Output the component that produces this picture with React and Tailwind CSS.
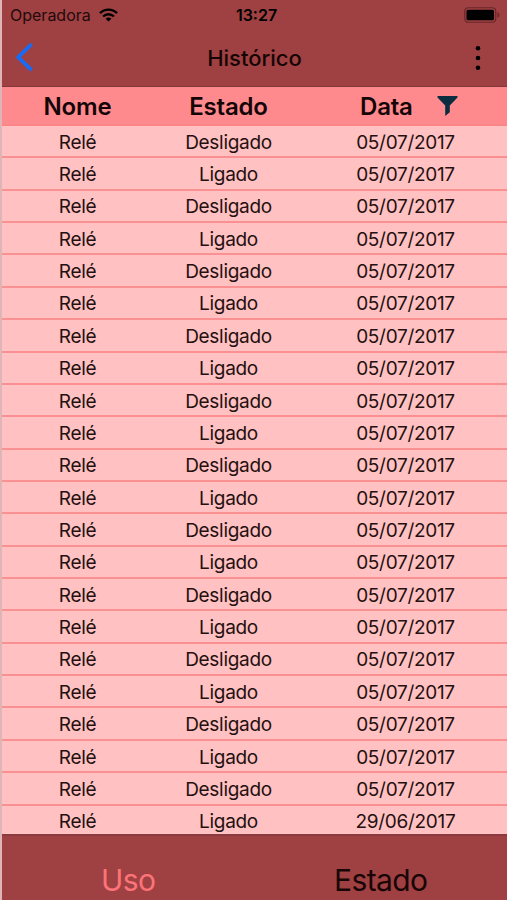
import React from 'react';

const rows = Array.from({ length: 22 }, (_, i) => ({
  id: i,
  nome: 'Relé',
  estado: i % 2 === 0 ? 'Desligado' : 'Ligado',
  data: i === 21 ? '29/06/2017' : '05/07/2017',
}));

const StatusBar = () => (
  <div className="grid grid-cols-[1fr_auto_1fr] items-center h-[30px] pl-2 pr-[7px] text-black">
    <div className="flex items-center gap-[8px]">
      <span className="text-[16px] leading-5 text-[#230a0b]">Operadora</span>
      <svg className="w-[19px] h-[14px]" viewBox="0 0 19 14" fill="none" stroke="currentColor" strokeWidth="2.4">
        <path d="M1 5.2C5.8 0.4 13.2 0.4 18 5.2" />
        <path d="M4.1 8.5C7.2 5.5 11.8 5.5 14.9 8.5" />
        <path d="M9.5 13.6 6.6 10.7C8.3 9.2 10.7 9.2 12.4 10.7Z" fill="currentColor" stroke="none" />
      </svg>
    </div>
    <span className="pl-[3px] text-[16px] leading-5 font-semibold">13:27</span>
    <svg className="w-9 h-4 justify-self-end" viewBox="0 0 36 16">
      <rect x="0.75" y="0.75" width="31" height="14.5" rx="3.5" fill="none" stroke="#6b2729" strokeWidth="1.2" />
      <rect x="2.5" y="2.7" width="27.5" height="10.6" rx="1.5" fill="#000" />
      <path d="M33.5 5.2c2.6 0.8 2.6 4.8 0 5.6Z" fill="#6b2729" />
    </svg>
  </div>
);

const NavBar = () => (
  <div className="grid grid-cols-[1fr_auto_1fr] items-center h-[56px] px-[13px]">
    <svg className="w-[18px] h-[30px]" viewBox="0 0 18 30" fill="none" stroke="#176bf5" strokeWidth="3.8">
      <path d="M16.6 1.2 3.2 14.2 16.6 27.2" />
    </svg>
    <h1 className="text-[22px] leading-7 font-medium text-[#160505]">Histórico</h1>
    <svg className="w-[6px] h-[26px] mr-[13px] justify-self-end" viewBox="0 0 6 26" fill="#000">
      <circle cx="3" cy="3.2" r="2.3" />
      <circle cx="3" cy="13" r="2.3" />
      <circle cx="3" cy="22.8" r="2.3" />
    </svg>
  </div>
);

export default function App() {
  return (
    <div className="w-[507px] h-[900px] flex flex-col overflow-hidden border-l-2 border-[#dfb5b8] bg-[#9f4042] font-['Inter','Liberation_Sans',sans-serif]">
      <header className="h-[87px] shrink-0 border-b border-[#853638]">
        <StatusBar />
        <NavBar />
      </header>

      <main className="h-[747px] shrink-0 overflow-hidden bg-[#ffc1c2] text-center">
        <div className="grid grid-cols-[151px_151px_203px] items-center h-[39px] pt-[2px] bg-[#ff8a8e] border-b-2 border-[#fb8587] text-[24px] leading-8 font-semibold tracking-[-0.2px] text-[#140607]">
          <span>Nome</span>
          <span>Estado</span>
          <span className="flex items-center gap-[24px] pl-[56px]">
            Data
            <svg className="w-[21px] h-[21px]" viewBox="0 0 21 21" fill="#0c2c40">
              <path d="M0.5 0H20.5V1.5L12.8 9.5V16.3L8.2 20V9.5L0.5 1.5Z" />
            </svg>
          </span>
        </div>
        {rows.map((row) => (
          <div
            key={row.id}
            className="grid grid-cols-[151px_151px_203px] items-center h-[32.36px] pt-[3px] border-b-2 border-[#fb9092] text-[19px] leading-6 tracking-[-0.3px] text-[#24100f]"
          >
            <span>{row.nome}</span>
            <span>{row.estado}</span>
            <span>{row.data}</span>
          </div>
        ))}
      </main>

      <footer className="grid grid-cols-2 flex-1 pt-[28px] border-t-2 border-[#8c3a3d] text-center text-[30px] leading-8 tracking-[-0.6px]">
        <span className="text-[#fc7379]">Uso</span>
        <span className="text-[#180606]">Estado</span>
      </footer>
    </div>
  );
}
